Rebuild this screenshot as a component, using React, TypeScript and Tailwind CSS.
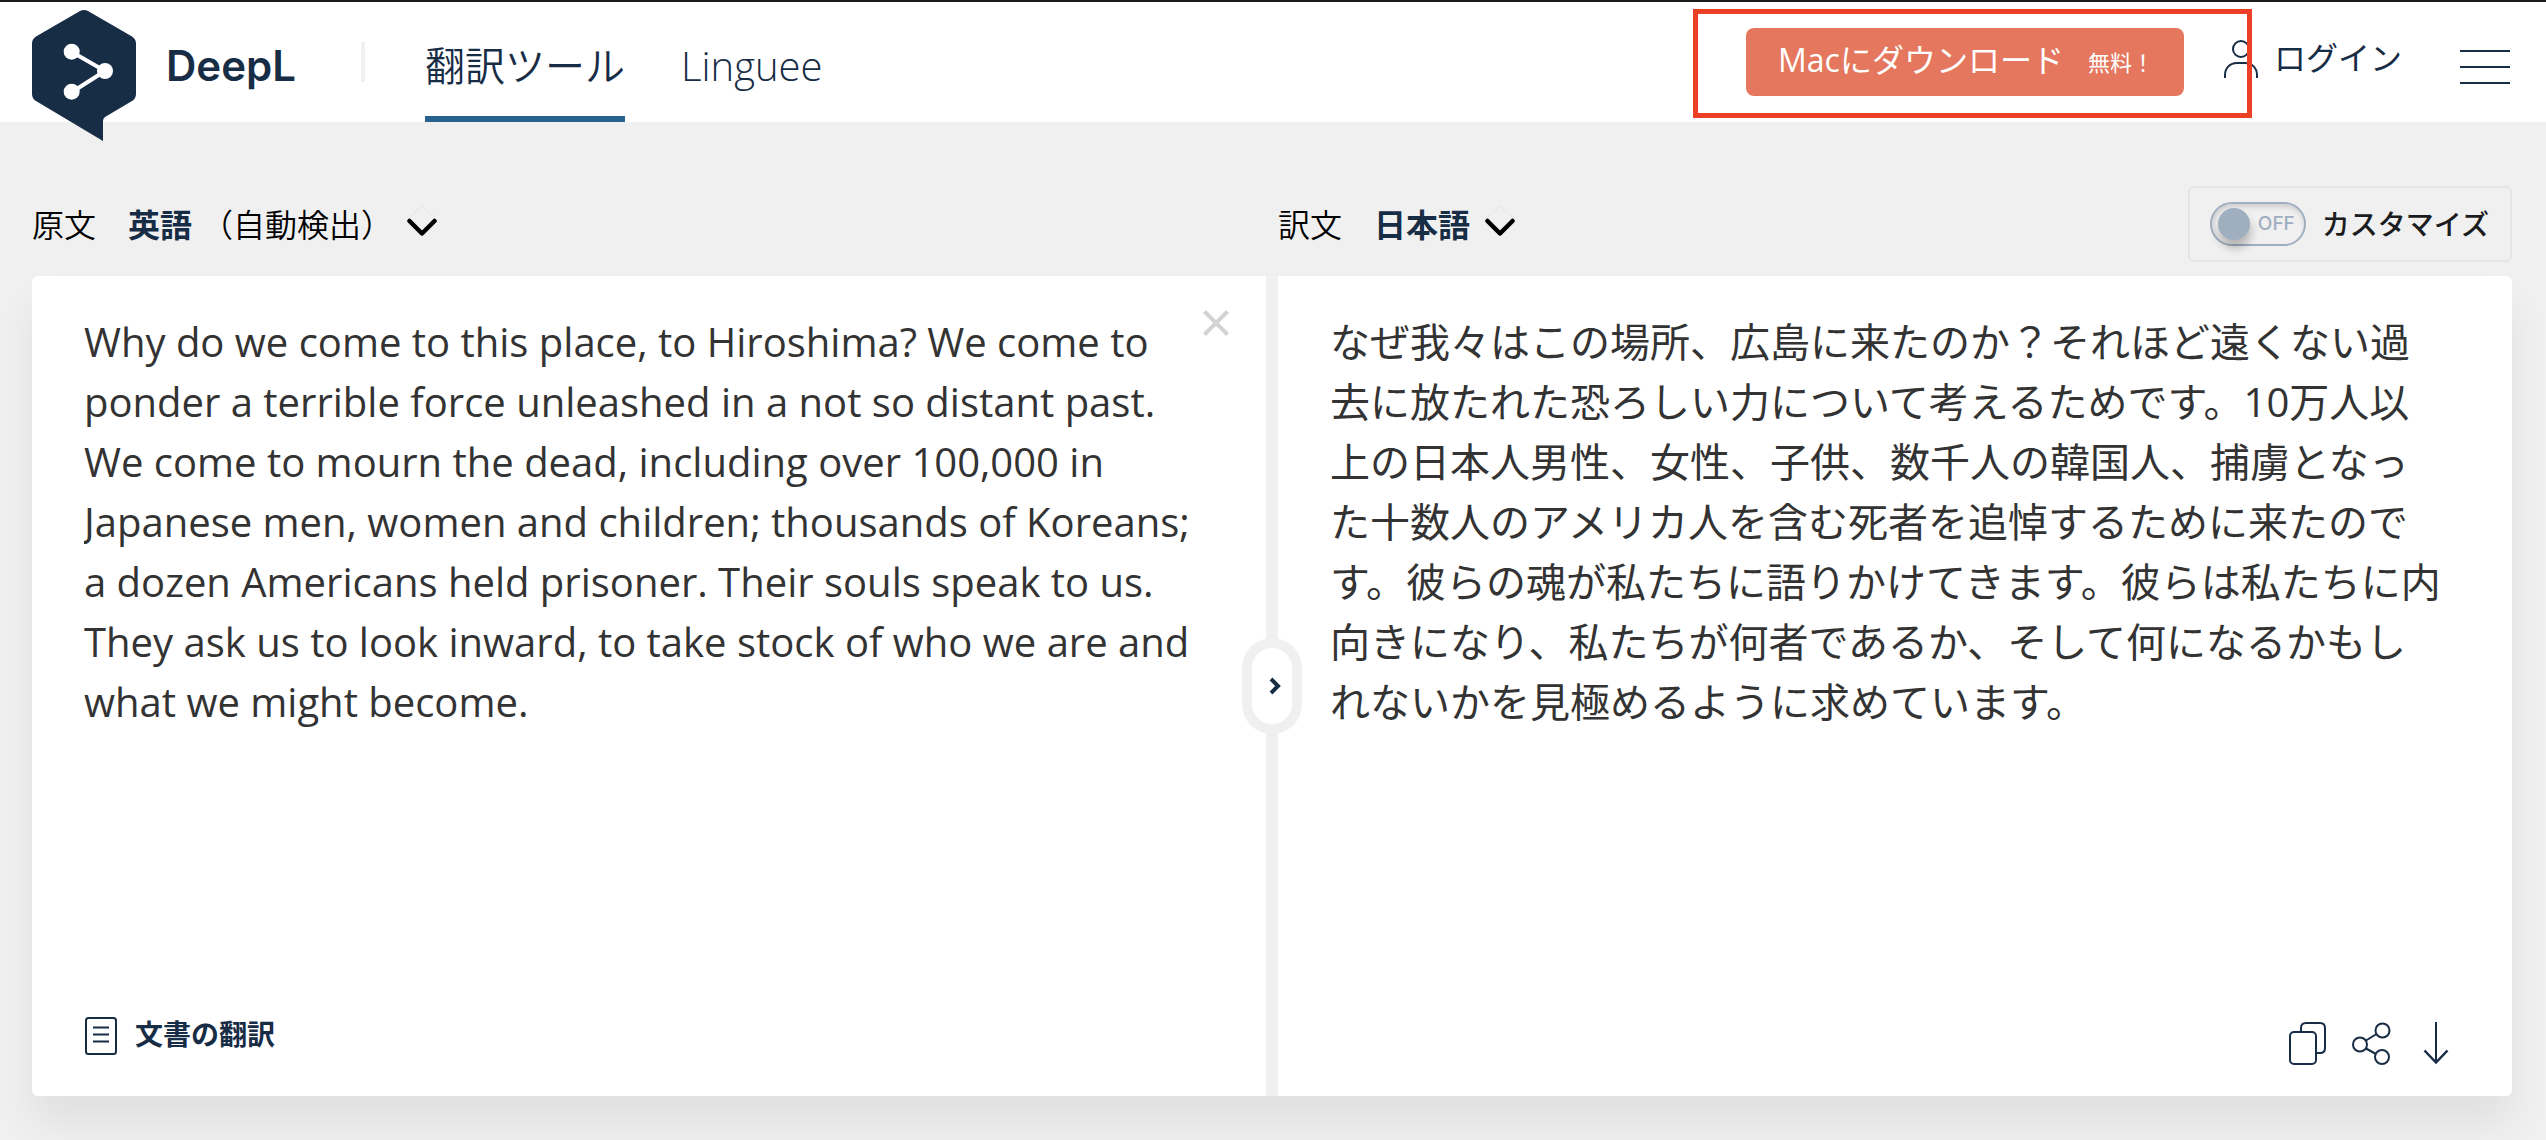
import type { ReactNode } from 'react'

const SOURCE_TEXT = [
  'Why do we come to this place, to Hiroshima? We come to',
  'ponder a terrible force unleashed in a not so distant past.',
  'We come to mourn the dead, including over 100,000 in',
  'Japanese men, women and children; thousands of Koreans;',
  'a dozen Americans held prisoner. Their souls speak to us.',
  'They ask us to look inward, to take stock of who we are and',
  'what we might become.',
].join('\n')

const TARGET_TEXT = [
  'なぜ我々はこの場所、広島に来たのか？それほど遠くない過',
  '去に放たれた恐ろしい力について考えるためです。10万人以',
  '上の日本人男性、女性、子供、数千人の韓国人、捕虜となっ',
  'た十数人のアメリカ人を含む死者を追悼するために来たので',
  'す。彼らの魂が私たちに語りかけてきます。彼らは私たちに内',
  '向きになり、私たちが何者であるか、そして何になるかもし',
  'れないかを見極めるように求めています。',
].join('\n')

function Logo() {
  return (
    <svg className="h-[131px] w-[104px] shrink-0" viewBox="0 0 104 131" aria-hidden="true">
      <path
        fill="#172c45"
        d="M48 1Q52-1 56 1L100 26.500Q104 29 104 33.500V84Q104 88.500 100 91L73 107Q71 108.500 71 111V131L4 91Q0 88.500 0 84V33.500Q0 29 4 26.500Z"
      />
      <path d="M40 42L73 61L40 82" fill="none" stroke="#fff" strokeWidth="4" />
      <circle cx="39.700" cy="41.700" r="8" fill="#fff" />
      <circle cx="73" cy="61" r="8" fill="#fff" />
      <circle cx="39.700" cy="81.700" r="8" fill="#fff" />
    </svg>
  )
}

function Chevron() {
  return (
    <svg className="h-8 w-[30px] shrink-0" viewBox="0 0 30 32" fill="none" aria-hidden="true">
      <path d="M1 14L14 1.500H16L29 14" stroke="#d8d8d8" strokeWidth="0.500" />
      <path
        d="M2.500 16L15 28.500L27.500 16"
        stroke="#000"
        strokeWidth="4.500"
        strokeLinecap="round"
        strokeLinejoin="round"
      />
    </svg>
  )
}

function Header() {
  return (
    <header className="flex h-[122px] items-start border-t-2 border-[#1c1c1e] bg-white pr-9 pl-8">
      <a href="#" className="flex items-start pt-2">
        <Logo />
        <span className="ml-[30px] pt-8 font-['Inter',sans-serif] text-[42px] leading-12 font-semibold">
          DeepL
        </span>
      </a>
      <span className="mt-10 ml-[65px] h-10 w-1 shrink-0 bg-[#f0f0f0]" />
      <nav className="ml-15 flex h-[120px] gap-14 text-[40px] leading-[128px] whitespace-nowrap">
        <a href="#" className="border-b-6 border-[#28638f] font-[350]">
          翻訳ツール
        </a>
        <a href="#" className="font-light">
          Linguee
        </a>
      </nav>
      <div className="relative mt-[26px] ml-auto shrink-0">
        <button
          type="button"
          className="flex h-[68px] w-[438px] items-center rounded-lg bg-[#e4775d] pb-1 pl-8 whitespace-nowrap text-white"
        >
          <span className="text-[32px]">Macにダウンロード</span>
          <span className="ml-6 pt-1 text-[22px]">無料！</span>
        </button>
        <span className="pointer-events-none absolute -top-[19px] -right-[68px] -bottom-[22px] -left-[53px] z-10 border-5 border-[#eb4026]" />
      </div>
      <a href="#" className="mt-8 ml-10 flex shrink-0 gap-4 text-[32px] leading-12 whitespace-nowrap">
        <svg
          className="mt-1.5 h-[38px] w-[34px]"
          viewBox="0 0 34 38"
          fill="none"
          stroke="currentColor"
          strokeWidth="2"
          aria-hidden="true"
        >
          <circle cx="17" cy="9" r="8" />
          <path d="M1 38V35C1 28 6 23 13 23H21C28 23 33 28 33 35V38" />
        </svg>
        ログイン
      </a>
      <button type="button" aria-label="メニュー" className="mt-12 ml-[58px] flex w-[50px] shrink-0 flex-col gap-3.5">
        <span className="h-0.5 w-full bg-[#172c45]" />
        <span className="h-0.5 w-full bg-[#172c45]" />
        <span className="h-0.5 w-full bg-[#172c45]" />
      </button>
    </header>
  )
}

type LanguageSelectProps = {
  id: string
  label: string
  language: string
  note?: string
}

function LanguageSelect({ id, label, language, note }: LanguageSelectProps) {
  return (
    <div className="flex items-center pt-0.5 text-[32px] leading-12 whitespace-nowrap">
      <label htmlFor={id} className="font-[350] text-black">
        {label}
      </label>
      <select id={id} className="ml-8 appearance-none bg-transparent font-bold text-[#172c45]">
        <option>{language}</option>
      </select>
      {note && <span className="ml-2 font-[350] text-black">{note}</span>}
      <span className="ml-3.5 pb-2">
        <Chevron />
      </span>
    </div>
  )
}

function CustomizeToggle() {
  return (
    <label className="relative flex h-[76px] items-center rounded-md border-2 border-[#e5e5e5] pr-[21px] pl-5">
      <input type="checkbox" className="peer sr-only" />
      <span className="flex h-11 w-24 items-center rounded-full border-2 border-[#9fafc0] pl-1.5 shadow-[inset_1px_3px_5px_rgba(0,0,0,0.15)]">
        <span className="size-8 rounded-full bg-[#9fafc0] shadow-[1px_8px_10px_rgba(0,0,0,0.25)]" />
        <span className="ml-2 font-['Inter',sans-serif] text-[19px] leading-6 font-medium text-[#9fafc0]">OFF</span>
      </span>
      <span className="ml-4 text-[28px] leading-10 font-medium text-[#1b1c20]">カスタマイズ</span>
    </label>
  )
}

type IconButtonProps = {
  label: string
  className: string
  viewBox: string
  children: ReactNode
}

function IconButton({ label, className, viewBox, children }: IconButtonProps) {
  return (
    <button type="button" aria-label={label}>
      <svg className={className} viewBox={viewBox} fill="none" stroke="#172c45" strokeWidth="2">
        {children}
      </svg>
    </button>
  )
}

function SourcePanel() {
  return (
    <section className="relative flex flex-col rounded-l-md bg-white pt-9 pl-[52px]">
      <textarea
        aria-label="原文"
        defaultValue={SOURCE_TEXT}
        spellCheck={false}
        className="w-full flex-1 resize-none overflow-hidden text-[40px] leading-[60px] whitespace-pre text-[#333] outline-none"
      />
      <button type="button" aria-label="原文を消去" className="absolute top-[34px] right-[37px]">
        <svg className="size-[26px]" viewBox="0 0 26 26" stroke="#d1d3d5" strokeWidth="4" aria-hidden="true">
          <path d="M1.500 1.500L24.500 24.500M24.500 1.500L1.500 24.500" />
        </svg>
      </button>
      <button type="button" className="mb-9 flex h-12 items-center self-start">
        <svg
          className="ml-px h-[38px] w-8"
          viewBox="0 0 32 38"
          fill="none"
          stroke="#172c45"
          strokeWidth="2"
          aria-hidden="true"
        >
          <rect x="1" y="1" width="30" height="36" rx="2.500" />
          <path d="M8 10.500H24M8 17.500H24M8 24.500H24" strokeWidth="1.800" />
        </svg>
        <span className="ml-[18px] pb-1 text-[28px] leading-10 font-semibold">文書の翻訳</span>
      </button>
    </section>
  )
}

function TargetPanel() {
  return (
    <section className="flex flex-col rounded-r-md bg-white pt-9 pl-[52px]">
      <textarea
        aria-label="訳文"
        defaultValue={TARGET_TEXT}
        spellCheck={false}
        className="w-full flex-1 resize-none overflow-hidden text-[40px] leading-[60px] whitespace-pre text-[#333] outline-none"
      />
      <div className="mr-[63px] mb-[31px] flex items-center justify-end gap-[26px]">
        <IconButton label="コピー" className="h-[43px] w-[37px]" viewBox="0 0 37 43">
          <rect x="1" y="10" width="26" height="32" rx="4" />
          <path d="M12 10V6C12 3 14 1 17 1H31C34 1 36 3 36 6V26C36 29 34 31 31 31H27" />
        </IconButton>
        <IconButton label="共有" className="h-[43px] w-[39px]" viewBox="0 0 39 43">
          <circle cx="8" cy="22.500" r="7" />
          <circle cx="30.500" cy="8.500" r="7" />
          <circle cx="30" cy="35" r="7" />
          <path d="M14 18.500L24.500 12M14 26.500L24 32" />
        </IconButton>
        <IconButton label="ダウンロード" className="ml-1.5 h-[43px] w-[26px]" viewBox="0 0 26 43">
          <path d="M13 0V41" />
          <path d="M1.500 28.500L13 40.500L24.500 28.500" strokeWidth="2.500" />
        </IconButton>
      </div>
    </section>
  )
}

function App() {
  return (
    <div
      lang="ja"
      className="flex min-h-screen flex-col bg-[#f0f0f0] font-['Open_Sans','Noto_Sans_CJK_JP',sans-serif] text-[#172c45]"
    >
      <Header />
      <main className="flex flex-1 flex-col pt-16 pr-[34px] pb-11 pl-8">
        <div className="mb-3.5 grid h-[76px] grid-cols-2 gap-3">
          <div className="flex items-center">
            <LanguageSelect id="source-language" label="原文" language="英語" note="（自動検出）" />
          </div>
          <div className="flex items-center justify-between">
            <LanguageSelect id="target-language" label="訳文" language="日本語" />
            <CustomizeToggle />
          </div>
        </div>
        <div className="relative grid flex-1 grid-cols-2 gap-3 rounded-md bg-[#f0f0f0] shadow-[0_28px_40px_rgba(0,0,0,0.065)]">
          <SourcePanel />
          <TargetPanel />
          <button
            type="button"
            aria-label="言語を入れ替える"
            className="absolute top-[362px] left-1/2 flex h-24 w-[60px] -translate-x-1/2 items-center justify-center rounded-full border-10 border-[#f0f0f0] bg-white"
          >
            <svg className="ml-1.5 h-[18px] w-3" viewBox="0 0 12 18" fill="none" aria-hidden="true">
              <path d="M2 2L9 9L2 16" stroke="#172c45" strokeWidth="4" />
            </svg>
          </button>
        </div>
      </main>
    </div>
  )
}

export default App
